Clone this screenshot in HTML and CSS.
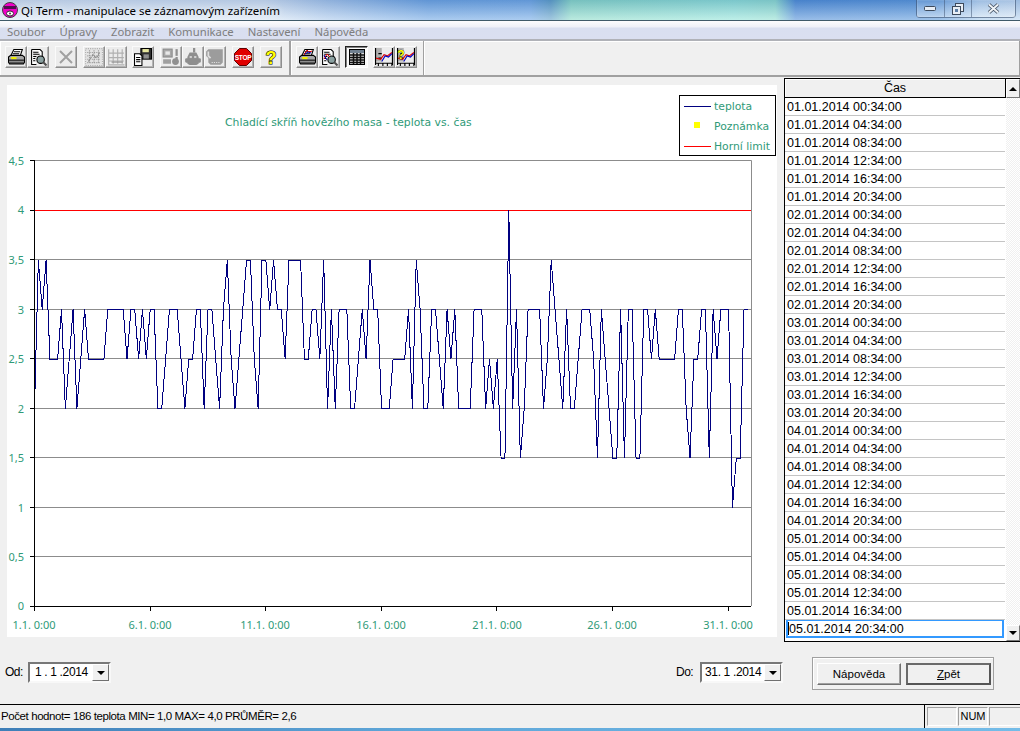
FILE: index.html
```html
<!DOCTYPE html>
<html lang="cs">
<head>
<meta charset="utf-8">
<title>Qi Term - manipulace se záznamovým zařízením</title>
<link rel="stylesheet" href="styles.css">
</head>
<body>
<svg class="defs" width="0" height="0">
  <symbol id="printer" viewBox="0 0 16 16">
    <path d="M5.500.5h8l-2 6h-9z" fill="#fff" stroke="#000"/>
    <path d="M5.500 2.500h6M4.500 4.500h6" stroke="#000"/>
    <path d="M.5 7.500l2-1.500h11l2 1.500v5l-1 1.500h-13l-1-1.500z" fill="#a8a8a8" stroke="#000"/>
    <path d="M1 10.500h14" stroke="#000"/><path d="M3 8.500h5" stroke="#f0f000" stroke-width="2"/>
    <path d="M1 12.500h14" stroke="#404040"/>
  </symbol>
  <symbol id="preview" viewBox="0 0 16 16">
    <path d="M1.500.5h8l2 2v5M6 14.500h-4.500v-14" fill="#fff" stroke="#000"/>
    <path d="M3 3h5M3 5h6M3 7h3M3 9h2M3 11h2" stroke="#000"/>
    <circle cx="10" cy="10" r="3.500" fill="#8aa0a0" stroke="#000"/>
    <path d="M12.500 12.500l3 3" stroke="#505050" stroke-width="2"/>
  </symbol>
  <symbol id="minichart" viewBox="0 0 16 16">
    <rect x="0" y="0" width="6" height="12" fill="#b0b0b0"/>
    <path d="M.5 0v15M15.500 0v15M0 13.500h16M3 5h3M3 9h3M3 14v2M7 14v2M11 14v2M15 14v2" stroke="#000"/>
    <path d="M1 9l4 1 3-4 3 1 4-3" fill="none" stroke="#e00000"/>
    <path d="M6 12l3-5 3 1 3-3" fill="none" stroke="#0000c0"/>
  </symbol>
</svg>
<header class="titlebar">
  <svg class="appicon" width="16" height="16" viewBox="0 0 16 16"><circle cx="8" cy="8" r="7.500" fill="#f000c8" stroke="#404040"/><rect x="2" y="4" width="12" height="3" fill="#501050"/><ellipse cx="8" cy="11.500" rx="3.500" ry="2.500" fill="#fff" stroke="#303030"/><circle cx="8" cy="11.500" r="1" fill="#404040"/></svg>
  <span class="titletext">Qi Term - manipulace se záznamovým zařízením</span>
  <div class="capbtns">
    <div class="cap cap-min"><svg width="13" height="7" viewBox="0 0 13 7"><rect x=".5" y="1.500" width="11" height="4" rx="1" fill="#e8eef5" stroke="#3d4a5c"/></svg></div>
    <div class="cap cap-max"><svg width="12" height="12" viewBox="0 0 12 12"><rect x="3.500" y=".5" width="8" height="8" fill="#e8eef5" stroke="#3d4a5c"/><rect x=".5" y="3.500" width="8" height="8" fill="#e8eef5" stroke="#3d4a5c"/><rect x="3" y="6" width="3" height="3" fill="#5d7ea5"/></svg></div>
    <div class="cap cap-close"><svg width="13" height="11" viewBox="0 0 13 11"><path d="M2 1.500l9 8M11 1.500l-9 8" stroke="#3d4a5c" stroke-width="3.600"/><path d="M2 1.500l9 8M11 1.500l-9 8" stroke="#eef2f6" stroke-width="2"/></svg></div>
  </div>
</header>
<nav class="menubar">
  <span>Soubor</span><span>Úpravy</span><span>Zobrazit</span><span>Komunikace</span><span>Nastavení</span><span>Nápověda</span>
</nav>
<div class="toolbar">
  <div class="tbgroup tbgroup-a">
    <button class="tb"><svg width="17" height="17"><use href="#printer"/></svg></button>
    <button class="tb"><svg width="17" height="17"><use href="#preview"/></svg></button>
    <button class="tb sep"><svg width="16" height="16" viewBox="0 0 16 16"><path d="M2 2l12 12M14 2l-12 12" stroke="#a0a0a0" stroke-width="2"/></svg></button>
    <button class="tb sep"><svg width="18" height="18" viewBox="0 0 16 16"><rect x=".5" y=".5" width="15" height="15" fill="#e4e4e4" stroke="#b0b0b0" stroke-dasharray="1 1"/><path d="M2 4h12M2 7h12M2 10h12M2 13h12M4 2v12M8 2v12M12 2v12" stroke="#9a9a9a" stroke-dasharray="1 1"/><path d="M3 12l4-6 3 3 3-5" fill="none" stroke="#8a8a8a" stroke-dasharray="2 1"/></svg></button>
    <button class="tb"><svg width="18" height="18" viewBox="0 0 16 16"><path d="M1.500 1v14h14M1 4.500h14M1 8.500h14M1 11.500h14M5.500 1v13M9.500 1v13M13.500 1v13" fill="none" stroke="#b0b0b0"/><path d="M4 12.500h10" stroke="#909090"/></svg></button>
    <button class="tb sep-s"><svg width="18" height="18" viewBox="0 0 17 17"><rect x="6.500" y=".5" width="10" height="10" fill="#303030" stroke="#000"/><rect x="8" y="1" width="6" height="3" fill="#e8e8a0"/><rect x="9" y="6" width="5" height="4" fill="#909090"/><path d="M.5 5.500h5l2 2v9h-7z" fill="#fff" stroke="#000"/><path d="M2 9h4M2 11h4M2 13h4" stroke="#000"/></svg></button>
    <button class="tb sep"><svg width="18" height="18" viewBox="0 0 16 16"><rect x="1" y="1" width="8" height="7" fill="#a8a8a8" stroke="#8c8c8c"/><rect x="3" y="3" width="4" height="3" fill="#e8e8e8"/><rect x="12" y="1" width="2" height="6" fill="#909090"/><rect x="12" y="8" width="2" height="2" fill="#909090"/><rect x="1" y="10" width="7" height="4" fill="#a0a0a0"/><circle cx="12" cy="12" r="3" fill="#909090"/></svg></button>
    <button class="tb"><svg width="18" height="18" viewBox="0 0 16 16"><rect x="8" y="0" width="2" height="4" fill="#909090"/><path d="M5 4h6l2 4v6l-2 1h-6l-2-1v-6z" fill="#8e8e8e"/><path d="M5 7h2v2h-2zM9 7h2v2h-2z" fill="#d0d0d0"/><rect x="1" y="9" width="14" height="4" rx="1" fill="#8e8e8e"/></svg></button>
    <button class="tb tb-cup"><svg width="20" height="18" viewBox="0 0 18 16"><path d="M1 3l2-2h13v12l-2 2h-9l-2-2v-4l-2-2z" fill="#9c9c9c"/><path d="M3 3v4l2 2" fill="none" stroke="#e0e0e0" stroke-width="1.500"/><path d="M6 13h8" stroke="#e0e0e0" stroke-dasharray="1 1"/></svg></button>
    <button class="tb sep"><svg width="18" height="18" viewBox="0 0 18 18"><path d="M5.500.5h7l5 5v7l-5 5h-7l-5-5v-7z" fill="#e00000" stroke="#600000"/><text x="9" y="11.500" class="stoptext">STOP</text></svg></button>
    <button class="tb sep"><svg width="16" height="18" viewBox="0 0 16 18"><text x="8" y="15.500" class="helptext">?</text></svg></button>
  </div>
  <div class="tbgroup tbgroup-b">
    <button class="tb"><svg width="17" height="17"><use href="#printer"/><path d="M5 6l3-5 2 2 3-1" fill="none" stroke="#e00000"/><path d="M6 5l3-2 3 1" fill="none" stroke="#0000c0"/></svg></button>
    <button class="tb"><svg width="17" height="17"><use href="#preview"/><path d="M3 10l3-5 3 3" fill="none" stroke="#e00000"/><path d="M3 6l3 5" fill="none" stroke="#0000c0"/></svg></button>
    <button class="tb tb-on sep-m"><svg width="16" height="16" viewBox="0 0 16 16"><rect x=".5" y=".5" width="15" height="15" fill="#d8d8d8" stroke="#000"/><rect x="1" y="1" width="14" height="3" fill="#708090"/><path d="M1 6h14M1 8.500h14M1 11h14M1 13.500h14M4.500 4v11M8 4v11M11.500 4v11" stroke="#101010" stroke-width="1.500"/></svg></button>
    <button class="tb sep-m"><svg width="18" height="18"><use href="#minichart"/></svg></button>
    <button class="tb"><svg width="18" height="18"><use href="#minichart"/><text x="4" y="11" class="helpmini">?</text></svg></button>
  </div>
  <div class="tbgroup tbgroup-c"></div>
</div>
<main class="content">
  <section class="chartpanel">
    <svg class="chart" width="770" height="552" viewBox="7 85 770 552">
      <path class="grid" d="M34 160.500H751.500V606M34 259.500H751M34 309.500H751M34 358.500H751M34 408.500H751M34 457.500H751M34 507.500H751M34 556.500H751"/>
      <path class="limit" d="M34 210.500H751"/>
      <polyline class="series" transform="translate(34.500 606.500) scale(3.856 -99)" points="0,2 1,3.500 2,3 3,3.500 4,2.500 5,2.500 6,2.500 7,3 8,2 9,2.500 10,3 11,2 12,2.500 13,3 14,2.500 15,2.500 16,2.500 17,2.500 18,2.500 19,3 20,3 21,3 22,3 23,3 24,2.500 25,3 26,3 27,2.500 28,3 29,2.500 30,3 31,3 32,2 33,2 34,2.500 35,3 36,3 37,3 38,2.500 39,2 40,2.500 41,2.500 42,3 43,3 44,2 45,3 46,3 47,2.500 48,2 49,3 50,3.500 51,2.500 52,2 53,2.500 54,3 55,3.500 56,3.500 57,2.500 58,2 59,3.500 60,3.500 61,3 62,3.500 63,3 64,3 65,2.500 66,3.500 67,3.500 68,3.500 69,3.500 70,2.500 71,2.500 72,3 73,3 74,2.500 75,3.500 76,2 77,3 78,2 79,3 80,3 81,3 82,2 83,2 84,2.500 85,3 86,2.500 87,3.500 88,3 89,3 90,2 91,2 92,2 93,2.500 94,2.500 95,2.500 96,2.500 97,3 98,2 99,3.500 100,3 101,2 102,2 103,3 104,3 105,2.500 106,2 107,3 108,2.500 109,3 110,2 111,2 112,2 113,2 114,3 115,3 116,3 117,2 118,2.500 119,2 120,2.500 121,1.500 122,1.500 123,4 124,2 125,3 126,1.500 127,2 128,3 129,3 130,3 131,3 132,2 133,2.500 134,3.500 135,3 136,2.500 137,2 138,3 139,2 140,2 141,2.500 142,3 143,3 144,3 145,2.500 146,1.500 147,3 148,2.500 149,2 150,1.500 151,1.500 152,3 153,1.500 154,3 155,3 156,1.500 157,1.500 158,3 159,3 160,2.500 161,3 162,2.500 163,2.500 164,2.500 165,2.500 166,2.500 167,3 168,3 169,2 170,1.500 171,2.500 172,2.500 173,3 174,3 175,1.500 176,3 177,2.500 178,3 179,3 180,3 181,1 182,1.500 183,1.500 184,3 185,3"/>
      <path class="axis" d="M34.500 160V611M30 160.500H34M30 210.500H34M30 259.500H34M30 309.500H34M30 358.500H34M30 408.500H34M30 457.500H34M30 507.500H34M30 556.500H34M30 606.500H751M150.500 606V611M265.500 606V611M381.500 606V611M496.500 606V611M612.500 606V611M728.500 606V611"/>
      <rect class="legendbox" x="679.500" y="95.500" width="96" height="60"/>
      <path class="legend-blue" d="M684 106.500H711"/>
      <rect class="legend-yellow" x="694" y="122" width="6" height="6"/>
      <path class="limit" d="M684 146.500H711"/>
      <text class="ct" x="225" y="126">Chladící skříň hovězího masa - teplota vs. čas</text>
      <text class="ct legend" x="714" y="110">teplota</text>
      <text class="ct legend" x="714" y="130">Poznámka</text>
      <text class="ct legend" x="714" y="150">Horní limit</text>
      <g class="ylab">
        <text x="24" y="165">4,5</text><text x="24" y="214">4</text><text x="24" y="264">3,5</text><text x="24" y="314">3</text><text x="24" y="363">2,5</text><text x="24" y="413">2</text><text x="24" y="462">1,5</text><text x="24" y="512">1</text><text x="24" y="561">0,5</text><text x="24" y="610">0</text>
      </g>
      <g class="xlab">
        <text x="34" y="629">1.1. 0:00</text><text x="150" y="629">6.1. 0:00</text><text x="265" y="629">11.1. 0:00</text><text x="381" y="629">16.1. 0:00</text><text x="497" y="629">21.1. 0:00</text><text x="612" y="629">26.1. 0:00</text><text x="728" y="629">31.1. 0:00</text>
      </g>
    </svg>
  </section>
  <section class="gridpanel">
    <div class="gridhead"><div class="gridcol">Čas</div><div class="sb-btn sb-up"><i class="tri tri-up"></i></div></div>
    <div class="gridbody">
      <div class="rows">
        <div class="row">01.01.2014 00:34:00</div><div class="row">01.01.2014 04:34:00</div><div class="row">01.01.2014 08:34:00</div><div class="row">01.01.2014 12:34:00</div><div class="row">01.01.2014 16:34:00</div><div class="row">01.01.2014 20:34:00</div>
        <div class="row">02.01.2014 00:34:00</div><div class="row">02.01.2014 04:34:00</div><div class="row">02.01.2014 08:34:00</div><div class="row">02.01.2014 12:34:00</div><div class="row">02.01.2014 16:34:00</div><div class="row">02.01.2014 20:34:00</div>
        <div class="row">03.01.2014 00:34:00</div><div class="row">03.01.2014 04:34:00</div><div class="row">03.01.2014 08:34:00</div><div class="row">03.01.2014 12:34:00</div><div class="row">03.01.2014 16:34:00</div><div class="row">03.01.2014 20:34:00</div>
        <div class="row">04.01.2014 00:34:00</div><div class="row">04.01.2014 04:34:00</div><div class="row">04.01.2014 08:34:00</div><div class="row">04.01.2014 12:34:00</div><div class="row">04.01.2014 16:34:00</div><div class="row">04.01.2014 20:34:00</div>
        <div class="row">05.01.2014 00:34:00</div><div class="row">05.01.2014 04:34:00</div><div class="row">05.01.2014 08:34:00</div><div class="row">05.01.2014 12:34:00</div><div class="row">05.01.2014 16:34:00</div><div class="row row-sel">05.01.2014 20:34:00</div>
      </div>
      <div class="sb-track"><div class="sb-btn sb-down"><i class="tri"></i></div></div>
    </div>
  </section>
</main>
<section class="filters">
  <label class="lbl lbl-od">Od:</label>
  <div class="datebox"><span class="dateval">1 . 1 .2014</span><div class="ddbtn"><i class="tri"></i></div></div>
  <label class="lbl lbl-do">Do:</label>
  <div class="datebox"><span class="dateval dateval-do">31. 1 .2014</span><div class="ddbtn"><i class="tri"></i></div></div>
  <div class="actions">
    <button class="act">Nápověda</button>
    <button class="act act-def"><u>Z</u>pět</button>
  </div>
</section>
<footer class="statusbar">
  <div class="statustext">Počet hodnot= 186 teplota MIN= 1,0 MAX= 4,0 PRŮMĚR= 2,6</div>
  <div class="panes"><div class="pane pane-a"></div><div class="pane pane-b">NUM</div><div class="pane pane-c"></div></div>
</footer>
<div class="winbottom"></div>
</body>
</html>
```
FILE: styles.css
```css
* { box-sizing: border-box; }
html, body { margin: 0; padding: 0; }
body {
  width: 1020px; height: 731px; overflow: hidden; background: #f0f0f0;
  font-family: "Liberation Sans", Arial, sans-serif; font-size: 12px; color: #000;
  display: flex; flex-direction: column;
}
.defs { position: absolute; }

/* title bar */
.titlebar {
  height: 21px; flex: none; display: flex; align-items: flex-start; padding-left: 2px;
  border-bottom: 1px solid #3f5a68;
  background:
    linear-gradient(180deg, rgba(40,80,150,.2) 0%, rgba(255,255,255,.42) 100%),
    linear-gradient(90deg, #dce8f5 0%, #d8e6f5 26%, #a9c8ec 32%, #6ea6e4 42%, #6fa8e6 52%, #5fa0c8 54%, #8adcc8 56%, #8fe4d8 72%, #8fe0d0 76%, #4f8ed8 78%, #5a98dc 92%, #a8ccee 96%, #b8d4f0 100%);
}
.appicon { margin-top: 2px; flex: none; }
.titletext {
  margin-left: 3px; margin-top: 2px; font-family: "Noto Sans", "Open Sans", sans-serif;
  font-size: 11.500px; line-height: 17px; color: #000; text-shadow: 0 0 6px rgba(255,255,255,.9);
}
.capbtns { margin-left: auto; margin-right: 4px; display: flex; height: 18px; border: 1px solid rgba(60,80,110,.6); border-top: 0; border-radius: 0 0 4px 4px; box-shadow: inset 0 0 1px #fff; }
.cap { display: flex; align-items: center; justify-content: center; background: linear-gradient(180deg, rgba(255,255,255,.12), rgba(255,255,255,.35)); border-right: 1px solid rgba(60,80,110,.5); }
.cap-min { width: 28px; }
.cap-max { width: 27px; }
.cap-close { width: 43px; border-right: 0; }

/* menu */
.menubar {
  height: 20px; flex: none; display: flex; gap: 14px; padding: 3px 0 0 7px;
  font-family: "Noto Sans", "Open Sans", sans-serif; font-size: 11.300px; line-height: 15px; color: #7d7d7d;
  background: linear-gradient(180deg, #fcfcfd 0, #eef0f7 6px, #d9dff0 7px, #dadff0 100%);
  border-bottom: 2px solid #b0b2b8;
}

/* toolbar */
.toolbar { height: 36px; flex: none; display: flex; border-bottom: 1px solid #a0a0a0; }
.tbgroup { height: 35px; display: flex; align-items: flex-start; padding-top: 5px; border: 1px solid #a0a0a0; border-top: 0; border-left: 0; box-shadow: inset 1px 1px 0 #fff; }
.tbgroup-a { width: 290px; padding-left: 5px; }
.tbgroup-b { width: 134px; padding-left: 5px; border-left: 1px solid #a0a0a0; }
.tbgroup-c { flex: 1; }
.tb {
  width: 22px; height: 22px; padding: 0; margin: 0; display: flex; align-items: center; justify-content: center;
  background: #ececec; border: 1px solid; border-color: #fafafa #8e8e8e #8e8e8e #fafafa;
  box-shadow: inset -1px -1px 0 #b4b4b4;
}
.sep { margin-left: 6px; }
.sep-s { margin-left: 5px; }
.sep-m { margin-left: 5px; }
.tb-on { background: #fafafa; border-color: #222 #fff #fff #222; box-shadow: inset 1px 1px 0 #808080; width: 23px; }
.stoptext { font: bold 6.500px "Liberation Sans", sans-serif; fill: #fff; text-anchor: middle; letter-spacing: -.3px; }
.helptext { font: bold 18px "Liberation Sans", sans-serif; fill: #ffff00; stroke: #000; stroke-width: 1.100px; text-anchor: middle; paint-order: stroke; }
.helpmini { font: bold 12px "Liberation Sans", sans-serif; fill: #ffff00; stroke: #000; stroke-width: .7px; text-anchor: middle; paint-order: stroke; }

/* chart */
.content { height: 565px; flex: none; display: flex; align-items: flex-start; }
.chartpanel { margin: 8px 0 0 7px; width: 770px; height: 552px; background: #fff; flex: none; }
.chart { display: block; }
.grid { fill: none; stroke: #8c8c8c; stroke-width: 1; }
.limit { fill: none; stroke: #ff0000; stroke-width: 1; }
.series { fill: none; stroke: #000080; stroke-width: 1; vector-effect: non-scaling-stroke; shape-rendering: crispEdges; }
.axis { fill: none; stroke: #000; stroke-width: 1; }
.legendbox { fill: none; stroke: #000; stroke-width: 1; }
.legend-blue { stroke: #000080; stroke-width: 1; }
.legend-yellow { fill: #ffff00; }
.ct { font-family: "DejaVu Sans", Verdana, sans-serif; font-size: 10.800px; fill: #2f9a78; }
.ylab text, .xlab text { font-family: "Noto Sans", sans-serif; font-size: 11px; fill: #2f9a78; }
.ylab text { text-anchor: end; }
.xlab text { text-anchor: middle; }

/* grid */
.gridpanel { margin: 1px 0 0 7px; width: 236px; height: 564px; flex: none; display: flex; flex-direction: column; border-top: 1px solid #000; border-left: 1px solid #000; border-bottom: 1px solid #000; background: #fff; }
.gridhead { height: 19px; flex: none; display: flex; }
.gridcol { width: 221px; height: 19px; text-align: center; font-size: 12.500px; line-height: 18px; background: #f0f0f0; border-right: 1px solid #000; border-bottom: 1px solid #000; box-shadow: inset 1px 1px 0 #fff; }
.gridbody { flex: 1; display: flex; min-height: 0; }
.rows { width: 221px; flex: none; border-right: 1px solid #fff; }
.row { height: 18px; padding-left: 2px; font-size: 12.500px; line-height: 19px; color: #000; border-bottom: 1px solid #c4c4c4; white-space: nowrap; }
.row-sel { border: 2px solid #3399ff; border-top-width: 1px; padding-left: 0; line-height: 16px; margin-right: 1px; margin-left: 1px; }
.row-sel::before { content: ""; display: inline-block; width: 1px; height: 13px; background: #000; vertical-align: -2px; }
.sb-track { flex: 1; display: flex; flex-direction: column; justify-content: flex-end; background: repeating-conic-gradient(#f0f0f0 0 25%, #fff 0 50%) 0 0 / 2px 2px; }
.sb-btn { width: 14px; flex: none; display: flex; align-items: center; justify-content: center; background: #f0f0f0; border: 1px solid; border-color: #fff #777 #777 #fff; }
.sb-up { height: 19px; }
.sb-down { height: 16px; }
.tri { display: block; width: 0; height: 0; border-left: 4px solid transparent; border-right: 4px solid transparent; border-top: 4px solid #000; }
.tri-up { border-top: 0; border-bottom: 4px solid #000; }

/* filters */
.filters { height: 62px; flex: none; display: flex; align-items: flex-start; }
.lbl { margin-top: 22px; line-height: 16px; font-size: 12px; letter-spacing: -.5px; }
.lbl-od { margin-left: 5px; width: 23px; }
.lbl-do { margin-left: 565px; width: 24px; }
.datebox { margin-top: 20px; width: 83px; height: 21px; display: flex; background: #fff; border: 2px solid; border-color: #787878 #f8f8f8 #f8f8f8 #787878; }
.dateval { flex: 1; padding-left: 5px; font-size: 12px; letter-spacing: -.35px; line-height: 17px; white-space: nowrap; }
.dateval-do { padding-left: 3px; }
.ddbtn { width: 17px; height: 17px; flex: none; display: flex; align-items: center; justify-content: center; background: #f0f0f0; border: 1px solid; border-color: #fff #707070 #707070 #fff; }
.actions { margin: 15px 0 0 29px; width: 182px; height: 33px; display: flex; gap: 5px; padding: 5px 0 0 4px; border: 1px solid #a0a0a0; box-shadow: inset 1px 1px 0 #fff; }
.act { width: 84px; height: 22px; padding: 0; font: 11.500px "Liberation Sans", sans-serif; color: #000; background: #f0f0f0; border: 1px solid; border-color: #fff #707070 #707070 #fff; box-shadow: inset -1px -1px 0 #a0a0a0; }
.act-def { width: 85px; border: 2px solid; border-color: #6a6a6a #555 #555 #6a6a6a; box-shadow: none; }

/* status */
.statusbar { height: 24px; flex: none; display: flex; border-top: 1px solid #000; }
.statustext { flex: 1; padding: 3px 0 0 1px; font-size: 11.500px; letter-spacing: -.41px; line-height: 16px; white-space: nowrap; }
.panes { width: 96px; flex: none; display: flex; gap: 1px; padding: 2px 0 2px 2px; border-left: 1px solid #000; }
.pane { height: 19px; text-align: center; line-height: 17px; font-size: 11px; border: 1px solid; border-color: #a0a0a0 #fff #fff #a0a0a0; }
.pane-a { width: 30px; }
.pane-b { width: 30px; }
.pane-c { flex: 1; border-right: 0; }
.winbottom { flex: 1; background: linear-gradient(90deg, #3f7fb8, #5ea6d8 40%, #74bce8 100%); }
```
